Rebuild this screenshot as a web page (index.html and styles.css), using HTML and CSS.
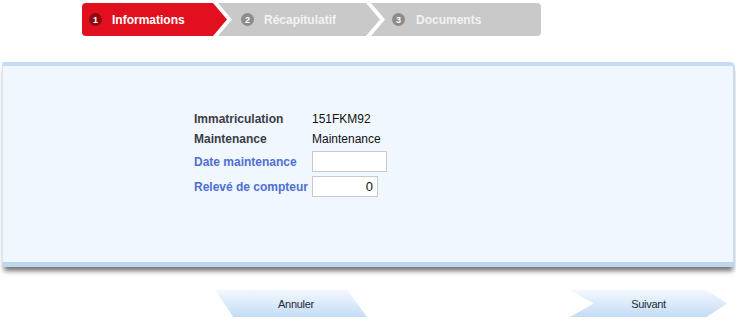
FILE: index.html
```html
<!DOCTYPE html>
<html lang="fr">
<head>
    <meta charset="UTF-8">
    <meta name="viewport" content="width=device-width, initial-scale=1.0">
    <title>Maintenance</title>
    <link rel="stylesheet" href="styles.css">
</head>
<body>

    <div class="steps">
        <div class="step step-1 active"><span class="num">1</span>Informations</div>
        <div class="step step-2"><span class="num">2</span>Récapitulatif</div>
        <div class="step step-3"><span class="num">3</span>Documents</div>
    </div>

    <div class="panel">
        <table class="form">
            <tr class="row-text">
                <td class="label">Immatriculation</td>
                <td class="value">151FKM92</td>
            </tr>
            <tr class="row-text">
                <td class="label">Maintenance</td>
                <td class="value">Maintenance</td>
            </tr>
            <tr class="row-input">
                <td class="label blue">Date maintenance</td>
                <td><input class="field date" type="text" value=""></td>
            </tr>
            <tr class="row-input">
                <td class="label blue">Relevé de compteur</td>
                <td><input class="field counter" type="text" value="0"></td>
            </tr>
        </table>
    </div>

    <div class="actions">
        <div class="btn cancel">Annuler</div>
        <div class="btn next">Suivant</div>
    </div>

</body>
</html>
```

FILE: styles.css
```css
*{margin: 0;
    padding: 0;
    box-sizing: border-box;
}
body{
    font-family: "Liberation Sans", Arial, sans-serif;
    background-color: #fff;
    width: 736px;
    height: 325px;
    overflow: hidden;
}
.steps{
    display: flex;
    margin: 3px 0 0 82px;
    height: 33px;
}
.step{
    height: 33px;
    display: flex;
    align-items: center;
    background-color: #c9c9c9;
    color: #f2f2f2;
    font-size: 12px;
    font-weight: bold;
    clip-path: polygon(0 0, calc(100% - 14px) 0, 100% 50%, calc(100% - 14px) 100%, 0 100%, 14px 50%);
}
.step-1{
    width: 145px;
    padding-left: 7px;
    border-radius: 4px 0 0 4px;
    clip-path: polygon(0 0, calc(100% - 14px) 0, 100% 50%, calc(100% - 14px) 100%, 0 100%);
}
.step-2{
    width: 162px;
    margin-left: -9px;
    padding-left: 23px;
}
.step-3{
    width: 170px;
    margin-left: -9px;
    padding-left: 21px;
    border-radius: 0 4px 4px 0;
    clip-path: polygon(0 0, 100% 0, 100% 100%, 0 100%, 14px 50%);
}
.step.active{
    background-color: #e0101f;
    color: #fff;
}
.num{
    width: 13px;
    height: 13px;
    border-radius: 50%;
    background-color: #8c8c8c;
    color: #fff;
    font-size: 9px;
    display: flex;
    justify-content: center;
    align-items: center;
    margin-right: 10px;
}
.active .num{
    background-color: #8e0a12;
}
.step-3 .num{
    margin-right: 11px;
}
.panel{
    margin: 26px 1px 0 2px;
    height: 205px;
    background-color: #f0f7fe;
    border-top: 4px solid #c3dbf3;
    border-left: 1px solid #d3e4f5;
    border-right: 2px solid #c8dcf0;
    border-bottom: 5px solid #bdd7f1;
    border-radius: 0 5px 0 0;
    box-shadow: 0 6px 5px -2px rgba(70, 70, 70, 0.75);
    padding: 43px 0 0 191px;
}
.form{
    border-collapse: collapse;
    font-size: 12px;
}
.form td{
    padding: 0;
    vertical-align: middle;
}
.row-text td{
    height: 20px;
}
.row-input td{
    height: 25px;
}
.label{
    width: 118px;
    font-weight: bold;
    color: #3c3c46;
}
.label.blue{
    color: #4f6fd3;
}
.value{
    color: #111;
}
.field{
    display: block;
    height: 21px;
    border: 1px solid #c9c9c9;
    background-color: #fff;
    font-family: "Liberation Sans", Arial, sans-serif;
    font-size: 13px;
    color: #111;
    padding: 0 4px;
    outline: none;
}
.field.date{
    width: 75px;
}
.field.counter{
    width: 66px;
    text-align: right;
}
.actions{
    display: flex;
    padding-left: 215px;
    margin-top: 23px;
}
.btn{
    height: 27px;
    display: flex;
    justify-content: center;
    align-items: center;
    font-size: 11px;
    letter-spacing: -0.3px;
    color: #1c2a3c;
    background: linear-gradient(to bottom, #f3f8fe, #c4dcf5);
    cursor: pointer;
}
.cancel{
    width: 152px;
    clip-path: polygon(0 0, 87% 0, 100% 100%, 12% 100%);
    padding-left: 10px;
}
.next{
    width: 157px;
    margin-left: 203px;
    clip-path: polygon(0 0, 87% 0, 100% 50%, 87% 100%, 0 100%, 15% 50%);
}
```
